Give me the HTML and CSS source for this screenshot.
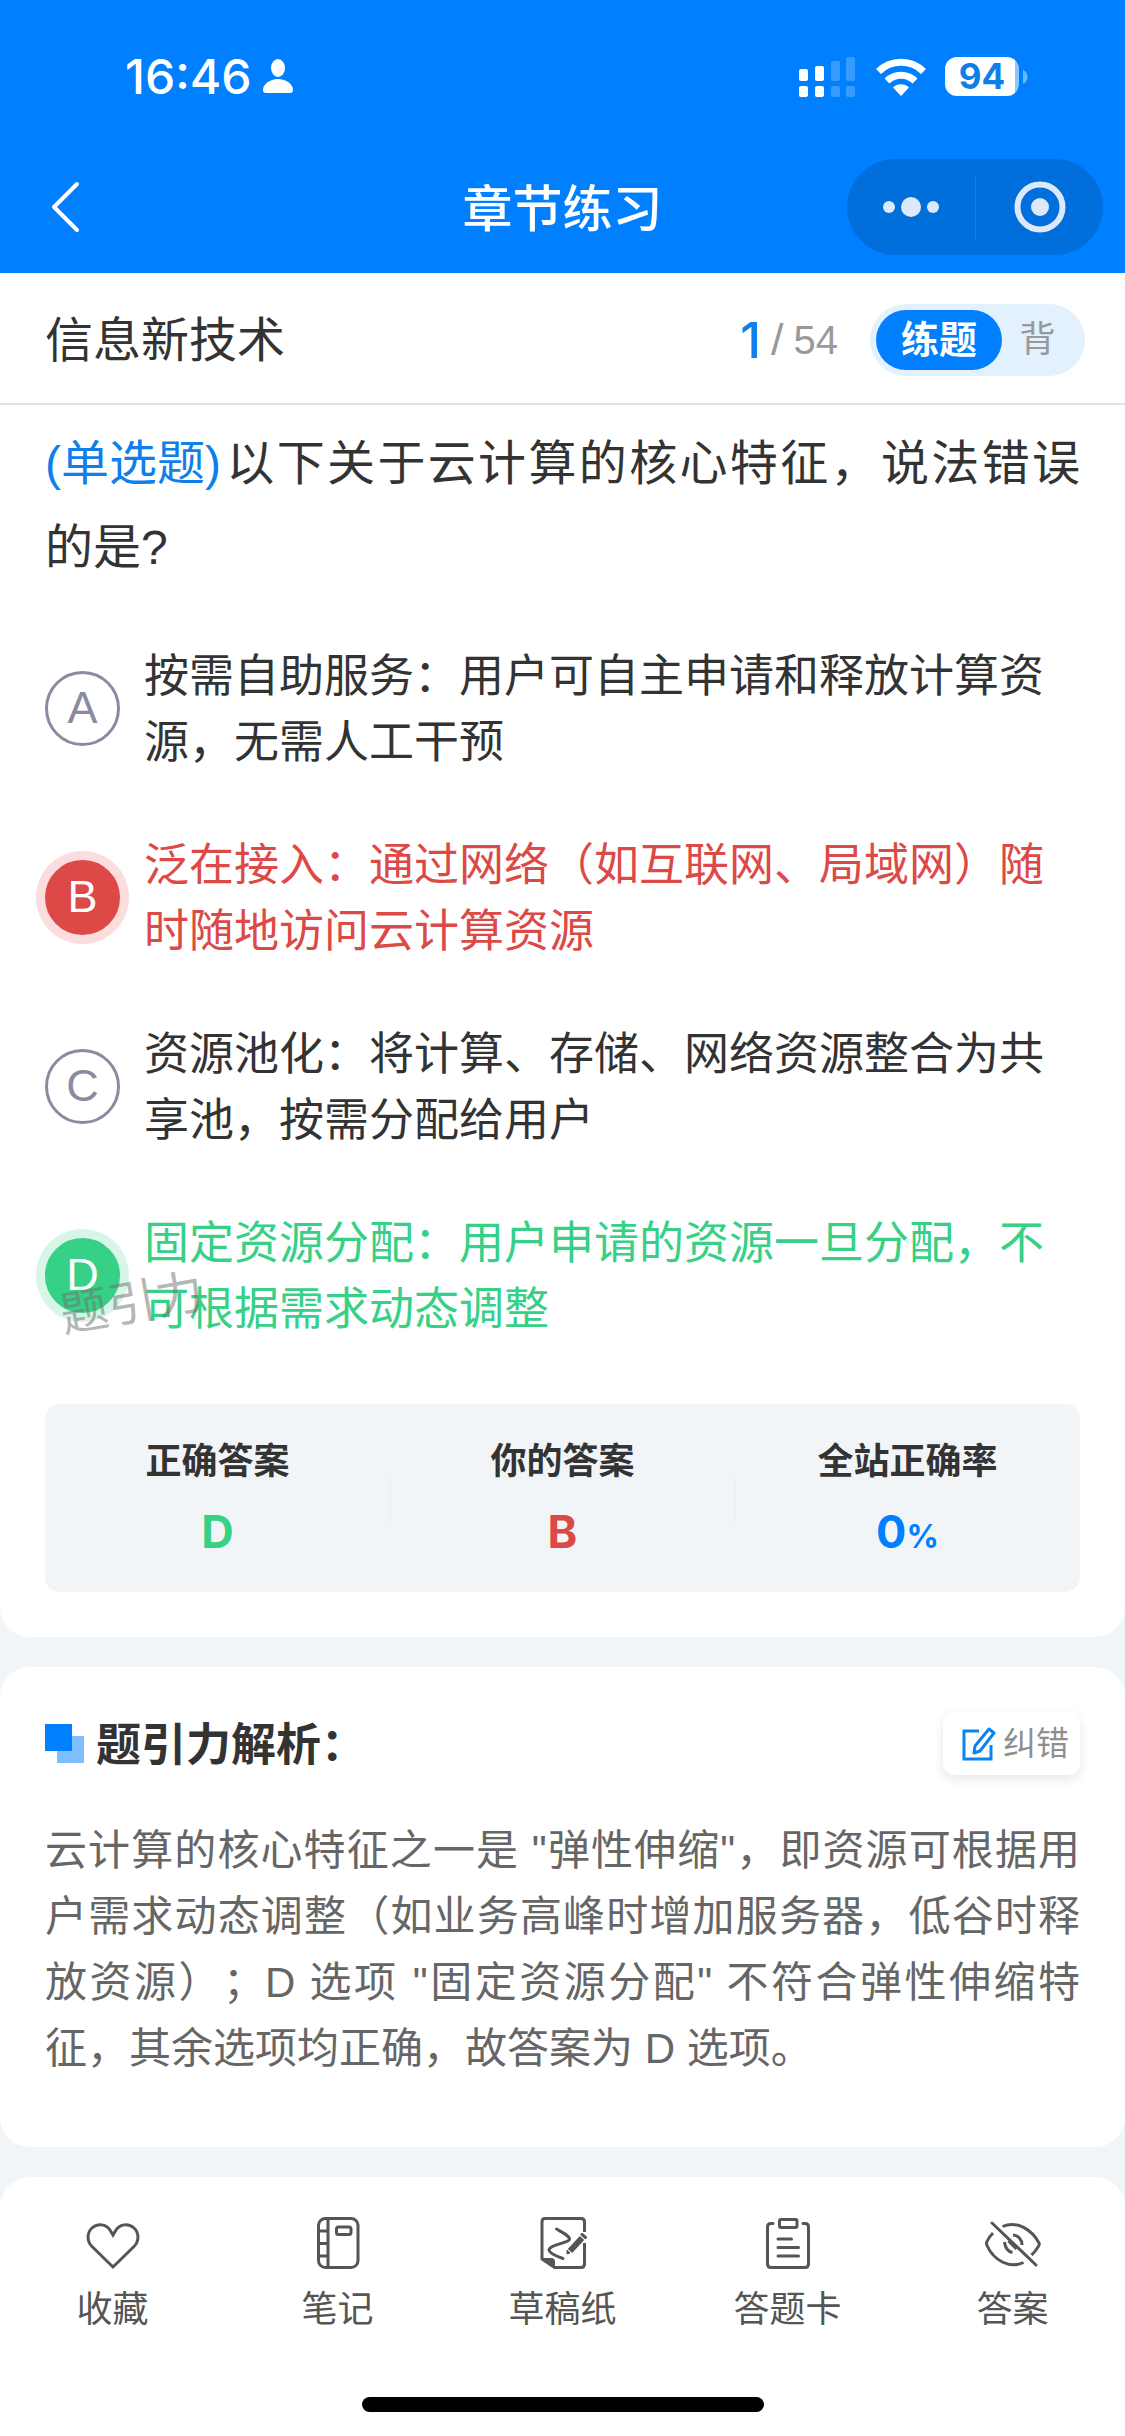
FILE: index.html
```html
<!DOCTYPE html>
<html lang="zh-CN">
<head>
<meta charset="utf-8">
<meta name="viewport" content="width=device-width">
<title>章节练习</title>
<link rel="stylesheet" href="styles.css">
</head>
<body>
<div class="page">
  <header class="header">
    <div class="status">
      <div class="status-left">
        <span class="time">16:46</span>
        <svg width="30" height="36" viewBox="0 0 30 36" fill="#fff" aria-hidden="true"><ellipse cx="15" cy="9" rx="7" ry="9"/><path d="M0 31C0 25 7 20 15 20s15 5 15 11c0 2-1 3-3 3H3c-2 0-3-1-3-3z"/></svg>
      </div>
      <div class="status-right">
        <svg width="57" height="40" viewBox="0 0 57 40" fill="#fff" aria-hidden="true">
          <rect x="0" y="12" width="9" height="12" rx="2"/><rect x="0" y="29" width="9" height="11" rx="2"/>
          <rect x="16" y="9" width="9" height="15" rx="2"/><rect x="16" y="29" width="9" height="11" rx="2"/>
          <g opacity=".22"><rect x="32" y="4" width="9" height="20" rx="2"/><rect x="32" y="29" width="9" height="11" rx="2"/>
          <rect x="47" y="0" width="9" height="24" rx="2"/><rect x="47" y="29" width="9" height="11" rx="2"/></g>
        </svg>
        <svg class="wifi" width="50" height="38" viewBox="0 0 50 38" aria-hidden="true">
          <g fill="none" stroke="#fff" stroke-width="7"><path d="M2.500 13.500a32 32 0 0 1 45 0"/><path d="M11 23a20 20 0 0 1 28 0"/></g>
          <path d="M17 29.500a11.500 11.500 0 0 1 16 0L25 38z" fill="#fff"/>
        </svg>
        <div class="battery"><span class="battery-level">94</span><svg width="6" height="14" viewBox="0 0 6 14" aria-hidden="true"><path d="M1 0c6 3 6 11 0 14z" fill="#66b8ff"/></svg></div>
      </div>
    </div>
    <div class="nav">
      <button class="back" aria-label="返回"><svg width="30" height="52" viewBox="0 0 30 52" fill="none" stroke="#fff" stroke-width="4" stroke-linecap="round" stroke-linejoin="round"><path d="M27 3 4 26l23 23"/></svg></button>
      <h1 class="title">章节练习</h1>
      <div class="capsule">
        <button class="capsule-btn" aria-label="更多"><svg width="58" height="24" viewBox="0 0 58 24" fill="#dbe9f8"><circle cx="7" cy="12" r="6"/><circle cx="29" cy="12" r="10"/><circle cx="51" cy="12" r="6"/></svg></button>
        <button class="capsule-btn" aria-label="关闭"><svg width="52" height="52" viewBox="0 0 52 52"><circle cx="26" cy="26" r="22.500" fill="none" stroke="#dbe9f8" stroke-width="6"/><circle cx="26" cy="26" r="9" fill="#dbe9f8"/></svg></button>
      </div>
    </div>
  </header>

  <main class="main">
    <section class="card card-question">
      <div class="chapter">
        <h2 class="chapter-name">信息新技术</h2>
        <div class="progress"><span class="current">1</span><span class="slash">/</span><span>54</span></div>
        <div class="mode"><button class="mode-btn is-active">练题</button><button class="mode-btn">背</button></div>
      </div>
      <div class="question">
        <p class="stem"><span class="kind">(单选题)</span>以下关于云计算的核心特征，说法错误的是?</p>
        <div class="options">
          <label class="option"><span class="mark"><input type="radio" name="answer"><span class="letter">A</span></span><span class="option-text">按需自助服务：用户可自主申请和释放计算资源，无需人工干预</span></label>
          <label class="option is-wrong"><span class="mark"><input type="radio" name="answer" checked><span class="letter">B</span></span><span class="option-text">泛在接入：通过网络（如互联网、局域网）随时随地访问云计算资源</span></label>
          <label class="option"><span class="mark"><input type="radio" name="answer"><span class="letter">C</span></span><span class="option-text">资源池化：将计算、存储、网络资源整合为共享池，按需分配给用户</span></label>
          <label class="option is-right"><span class="mark"><input type="radio" name="answer"><span class="letter">D</span></span><span class="option-text">固定资源分配：用户申请的资源一旦分配，不可根据需求动态调整</span><span class="watermark">题引力</span></label>
        </div>
        <dl class="result">
          <div class="result-item"><dt>正确答案</dt><dd class="green">D</dd></div>
          <div class="result-item"><dt>你的答案</dt><dd class="red">B</dd></div>
          <div class="result-item"><dt>全站正确率</dt><dd class="blue">0<small>%</small></dd></div>
        </dl>
      </div>
    </section>

    <section class="card card-analysis">
      <div class="analysis-head">
        <svg width="39" height="39" viewBox="0 0 39 39" aria-hidden="true"><path fill="#80bfff" d="M12 12h27v27H12z"/><path fill="#0080ff" d="M0 0h27v27H0z"/></svg>
        <h2 class="analysis-title">题引力解析：</h2>
        <button class="fix"><svg width="34" height="34" viewBox="0 0 34 34" fill="none" stroke="#0a84f0" stroke-width="3"><path d="M17 4H2v28h27V18"/><path d="M27 2l5 4-14 18-6 2 1-7z" stroke-linejoin="round"/></svg>纠错</button>
      </div>
      <p class="analysis-text">云计算的核心特征之一是 "弹性伸缩"，即资源可根据用户需求动态调整（如业务高峰时增加服务器，低谷时释放资源）；D 选项 "固定资源分配" 不符合弹性伸缩特征，其余选项均正确，故答案为 D 选项。</p>
    </section>
  </main>

  <footer class="footer">
    <nav class="tabs">
      <button class="tab"><svg class="icon" viewBox="0 0 60 60"><path d="M30 54 9 33.500C3.500 28 4 19.500 9 15c5.500-5 14-4 18 2l3 5 3-5c4-6 12.500-7 18-2 5 4.500 5.500 13 0 18.500z"/></svg>收藏</button>
      <button class="tab"><svg class="icon" viewBox="0 0 60 60"><rect x="10.500" y="5.500" width="39.500" height="49" rx="7"/><path d="M20 5.500v49M10.500 18H20M10.500 30.500H20M10.500 43H20"/><rect x="28.500" y="14" width="14.500" height="7.500" rx="2"/></svg>笔记</button>
      <button class="tab"><svg class="icon" viewBox="0 0 60 60"><path d="M51.500 19V9q0-3.500-3.500-3.500H12q-3 0-3 3.500v37l12.500 8.500H48q3.500 0 3.500-3.500V30"/><path d="M23.500 16c7 4 13 7 13 10 0 4-20 5.500-20.500 11 0 3 7 6 14 8.500" stroke-linecap="round"/><path d="M9 45h9q4 0 4 4v6.500z" fill="#555" stroke="none"/><path d="M37 38 49 25" stroke-width="6"/><path d="M34 41v-4l3 3z" fill="#555" stroke-width="1"/><path d="m49 21.500 3.500 3" stroke-linecap="round"/></svg>草稿纸</button>
      <button class="tab"><svg class="icon" viewBox="0 0 60 60" stroke-linecap="round"><path d="M15 10.500h-2q-3.500 0-3.500 3.500v37q0 3.500 3.500 3.500h34q3.500 0 3.500-3.500V14q0-3.500-3.500-3.500h-2"/><rect x="21.500" y="6.500" width="17.500" height="8" rx="1.500"/><path d="M20 26h13.500M20 34.500h20.500M20 43h20.500"/></svg>答题卡</button>
      <button class="tab"><svg class="icon" viewBox="0 0 60 60"><path d="M19.500 13.500C34 7 49 17 56 30q1 1.500-1 4-3 5-6.500 8M10 20q-4 4-6 8.500-1 2 0 4C11 48 27 56 40.500 49.500"/><path d="m9 10 44 42" stroke-linecap="round"/><path d="M30 22a9.500 9.500 0 0 1 9 10M21.500 29q1 9 8 10.500"/><path d="m25.500 28 8 8"/></svg>答案</button>
    </nav>
    <div class="home-bar"></div>
  </footer>
</div>
</body>
</html>
```
FILE: styles.css
```css
* { box-sizing: border-box; margin: 0; padding: 0; }

body {
  background: #f2f5f8;
  color: #333;
  font-family: "Liberation Sans", "Noto Sans CJK SC", sans-serif;
  text-spacing-trim: space-all;
}

button { border: 0; background: none; font: inherit; color: inherit; cursor: pointer; }
svg { display: block; flex: none; }

.page { min-height: 100vh; display: flex; flex-direction: column; }

/* Header */
.header { background: #0080ff; color: #fff; }
.status {
  height: 141px;
  padding: 12px 97px 0 125px;
  display: flex;
  align-items: center;
  justify-content: space-between;
}
.status-left { display: flex; align-items: center; gap: 12px; }
.time { font: 500 48px/60px Inter, sans-serif; }
.status-right { display: flex; align-items: center; }
.wifi { margin-left: 20px; margin-right: 19px; }
.battery { display: flex; align-items: center; gap: 3px; }
.battery-level {
  width: 74px;
  border-radius: 12px;
  background: linear-gradient(90deg, #fff 70px, #8cc8ff 70px);
  color: #0f7fe8;
  font: 700 35px/39px Inter, sans-serif;
  text-align: center;
}
.nav {
  height: 132px;
  padding: 0 22px;
  display: grid;
  grid-template-columns: 1fr auto 1fr;
  align-items: center;
}
.back { justify-self: start; margin-left: 28px; }
.title { padding-top: 5px; font-size: 50px; font-weight: 500; line-height: 60px; }
.capsule {
  justify-self: end;
  width: 256px;
  height: 96px;
  border-radius: 48px;
  background: #006edb;
  display: grid;
  grid-template-columns: 1fr 1fr;
  align-items: center;
}
.capsule-btn { height: 64px; display: grid; place-items: center; }
.capsule-btn + .capsule-btn { border-left: 1px solid #1b7de0; }

/* Chapter row */
.card { background: #fff; }
.chapter {
  height: 132px;
  padding: 3px 40px 0 45px;
  border-bottom: 2px solid #e0e0e0;
  display: flex;
  align-items: center;
}
.chapter-name { flex: 1; padding-top: 3px; font-size: 48px; font-weight: 400; line-height: 60px; }
.progress { display: flex; align-items: center; gap: 10px; color: #999; font: 400 40px/60px "Liberation Sans", sans-serif; }
.current { color: #0f80ea; font: 500 50px/60px Inter, sans-serif; }
.slash { font-size: 45px; }
.mode { margin-left: 32px; padding: 6px 12px 6px 6px; width: 215px; border-radius: 36px; background: #e3f0fd; display: flex; }
.mode-btn { flex: 1; height: 60px; border-radius: 30px; color: #999; font-size: 36px; line-height: 60px; }
.mode-btn.is-active { flex: none; width: 126px; background: #0080ff; color: #fff; font-size: 38px; font-weight: 700; }

/* Question */
.card-question { border-radius: 0 0 30px 30px; }
.question { padding: 17px 45px 45px; }
.stem { font-size: 48px; line-height: 84px; text-align: justify; }
.kind { display: inline-block; color: #0f80ea; margin-right: 3px; }
.options { margin-top: 50px; display: flex; flex-direction: column; gap: 53px; }
.option { position: relative; display: flex; align-items: center; gap: 24px; font-size: 45px; line-height: 66px; }
.option-text { padding-top: 4px; }
.mark { flex: none; display: grid; place-items: center; color: #8a8aa0; }
.mark > * { grid-area: 1 / 1; }
.mark input {
  appearance: none;
  width: 75px;
  height: 75px;
  border: 3px solid #8a8aa0;
  border-radius: 50%;
}
.letter { pointer-events: none; }
.is-wrong { color: #dc4946; }
.is-right { color: #36d086; }
.is-wrong .letter, .is-right .letter { color: #fff; }
.is-wrong input { background: #dc4946; border-color: #dc4946; box-shadow: 0 0 0 9px #fbdddd; }
.is-right input { background: #36d086; border-color: #36d086; box-shadow: 0 0 0 9px #d7f6e7; }
.watermark {
  position: absolute;
  left: 15px;
  bottom: 6px;
  font-size: 48px;
  color: rgba(110, 110, 110, .5);
  transform: rotate(-10deg);
}

.result { margin-top: 61px; padding: 36px 0 34px; border-radius: 15px; background: #f2f5f8; display: grid; grid-template-columns: 1fr 1fr 1fr; align-items: start; }
.result-item { text-align: center; }
.result-item + .result-item { background: linear-gradient(#ebeff3, #ebeff3) left center / 1px 48px no-repeat; }
.result dt { font-size: 36px; font-weight: 700; line-height: 44px; }
.result dd { margin-top: 22px; font: 700 45px/52px Inter, sans-serif; }
.result small { font-size: 32px; line-height: 32px; }
.green { color: #36d086; }
.red { color: #dc4946; }
.blue { color: #0080ff; }

/* Analysis */
.card-analysis { margin-top: 30px; padding: 45px 45px 65px; border-radius: 30px; }
.analysis-head { display: flex; align-items: center; }
.analysis-title { flex: 1; margin-left: 12px; padding-top: 4px; font-size: 45px; font-weight: 700; line-height: 59px; }
.fix {
  height: 63px;
  padding: 0 11px 0 19px;
  border-radius: 12px;
  box-shadow: 0 4px 12px rgba(0, 0, 0, .1);
  color: #8f8f8f;
  font-size: 33px;
  line-height: 63px;
  display: flex;
  align-items: center;
  gap: 7px;
}
.analysis-text { margin-top: 43px; color: #666; font-size: 42px; line-height: 66px; text-align: justify; }

/* Footer */
.footer { margin-top: 30px; padding: 36px 0 24px; border-radius: 30px 30px 0 0; background: #fff; }
.tabs { display: grid; grid-template-columns: repeat(5, 1fr); }
.tab { display: flex; flex-direction: column; align-items: center; gap: 16px; color: #555; font-size: 36px; line-height: 42px; }
.icon { width: 60px; height: 60px; fill: none; stroke: #555; stroke-width: 3; }
.home-bar { width: 402px; height: 15px; margin: 66px auto 0; border-radius: 8px; background: #000; }
```
